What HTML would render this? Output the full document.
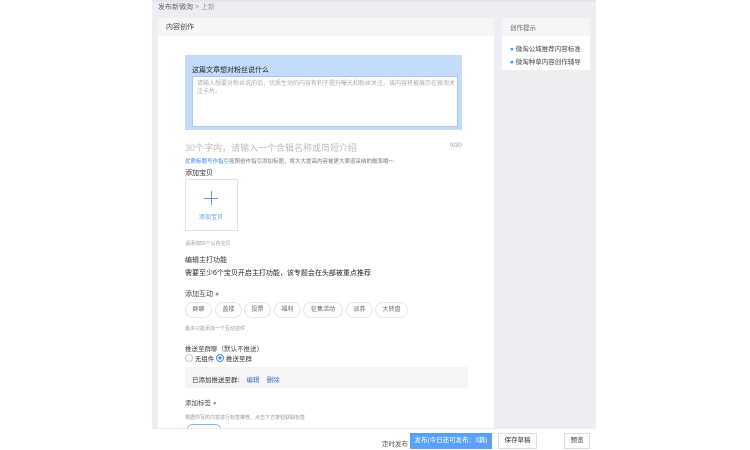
<!DOCTYPE html><html><head><meta charset="utf-8"><style>
body{margin:0;width:750px;height:450px;overflow:hidden;background:#fff;font-family:"Liberation Sans","Noto Sans CJK SC",sans-serif;position:relative}
.a{position:absolute}
.t{position:absolute;white-space:nowrap;color:#333}
.chip{position:absolute;top:302px;height:14px;border:1px solid #e6e6e6;border-radius:8px;font-size:6px;color:#666;line-height:14px;text-align:center}
</style></head><body>
<div class="a" style="left:152px;top:0;width:444px;height:428px;background:#eceef3"></div>
<div class="a" style="left:152px;top:0;width:444px;height:2px;background:#e3e5ea"></div>
<div class="t" style="left:158px;top:2px;font-size:7px;color:#666">发布新微淘 <span style="color:#999">&gt; 上新</span></div>
<div class="a" style="left:158px;top:18px;width:336px;height:410px;background:#fff"></div>
<div class="a" style="left:158px;top:18px;width:336px;height:18px;background:#f6f6f6"></div>
<div class="t" style="left:166px;top:22px;font-size:7px;color:#444">内容创作</div>
<div class="a" style="left:502px;top:18px;width:88px;height:52px;background:#fff"></div>
<div class="a" style="left:502px;top:18px;width:88px;height:18px;background:#f6f6f6"></div>
<div class="t" style="left:510px;top:22px;font-size:6.5px;color:#666">创作提示</div>
<div class="t" style="left:510px;top:43px;font-size:6.5px;color:#444"><span style="color:#3d8ef0">●</span> 微淘公域推荐内容标准</div>
<div class="t" style="left:510px;top:56px;font-size:6.5px;color:#444"><span style="color:#3d8ef0">●</span> 微淘种草内容创作辅导</div>
<div class="a" style="left:185px;top:55px;width:277px;height:75px;background:#c4dbfb"></div>
<div class="t" style="left:192px;top:65px;font-size:7px;color:#222">这篇文章想对粉丝说什么</div>
<div class="a" style="left:192px;top:76px;width:266px;height:51px;background:#fff;border:1px solid #aac9f2;box-sizing:border-box"></div>
<div class="t" style="left:197px;top:80px;font-size:6px;color:#aaa;white-space:normal;width:258px;line-height:8px">请输入想要对粉丝说的话，优质生动的内容有利于提升曝光和粉丝关注。该内容将被展示在微淘关注卡片。</div>
<div class="t" style="left:185px;top:141px;font-size:9px;color:#bbb">30个字内，请输入一个合辑名称或简短介绍</div>
<div class="t" style="left:450px;top:143px;font-size:6px;color:#999">0/30</div>
<div class="t" style="left:185px;top:157px;font-size:5.5px;color:#777"><span style="color:#3d7ef0">优质标题写作指引</span>按照创作指引添加标题，将大大提高内容被更大渠道采纳的概率哦～</div>
<div class="t" style="left:185px;top:168px;font-size:7px;color:#333">添加宝贝</div>
<div class="a" style="left:185px;top:179px;width:53px;height:52px;border:1px solid #d5e4fa;box-sizing:border-box"></div>
<div class="a" style="left:204px;top:198px;width:14px;height:1px;background:#5a9af0"></div>
<div class="a" style="left:211px;top:191px;width:1px;height:14px;background:#5a9af0"></div>
<div class="t" style="left:199px;top:212px;font-size:6px;color:#5a9af0">添加宝贝</div>
<div class="t" style="left:185px;top:240px;font-size:5px;color:#999">请添加50个以内宝贝</div>
<div class="t" style="left:185px;top:255px;font-size:7px;color:#333">编辑主打功能</div>
<div class="t" style="left:185px;top:268px;font-size:7px;color:#222">需要至少6个宝贝开启主打功能，该专题会在头部被重点推荐</div>
<div class="t" style="left:185px;top:289px;font-size:7px;color:#444">添加互动 <span style="color:#999">●</span></div>
<div class="chip" style="left:185px;width:25px">群聊</div>
<div class="chip" style="left:215px;width:25px">盖楼</div>
<div class="chip" style="left:244px;width:25px">投票</div>
<div class="chip" style="left:274px;width:25px">福利</div>
<div class="chip" style="left:303px;width:38px">征集活动</div>
<div class="chip" style="left:346px;width:25px">派券</div>
<div class="chip" style="left:375px;width:31px">大转盘</div>
<div class="t" style="left:185px;top:325px;font-size:5px;color:#999">最多只能添加一个互动挂件</div>
<div class="t" style="left:185px;top:343px;font-size:6.5px;color:#444">推送至群聊（默认不推送）</div>
<div class="t" style="left:185px;top:353px;font-size:6.5px;color:#333"><span style="display:inline-block;width:6px;height:6px;border:1px solid #ccc;border-radius:50%;vertical-align:-1px"></span> 无组件 <span style="display:inline-block;width:6px;height:6px;border:1px solid #3d8ef0;border-radius:50%;vertical-align:-1px;background:radial-gradient(#3d8ef0 35%,#fff 40%)"></span> 推送至群</div>
<div class="a" style="left:185px;top:367px;width:283px;height:21px;background:#f5f5f5"></div>
<div class="t" style="left:192px;top:374px;font-size:6.5px;color:#333">已添加推送至群: &nbsp;&nbsp;&nbsp;<span style="color:#3d6ed0">编辑</span> &nbsp;&nbsp;&nbsp;<span style="color:#3d6ed0">删除</span></div>
<div class="t" style="left:185px;top:397px;font-size:6.5px;color:#444">添加标签 <span style="color:#999">●</span></div>
<div class="t" style="left:185px;top:414px;font-size:5px;color:#999">根据你写的内容进行标签推荐，点击下方按钮获取标签</div>
<div class="a" style="left:187px;top:424px;width:34px;height:10px;border:1px solid #8fb8f0;border-radius:6px;box-sizing:border-box"></div>
<div class="a" style="left:152px;top:428px;width:444px;height:22px;background:#fff;border-top:1px solid #eee;box-sizing:border-box"></div>
<div class="t" style="left:382px;top:438px;font-size:6.5px;color:#555">定时发布</div>
<div class="a" style="left:410px;top:433px;width:82px;height:16px;background:#5aa0f5;color:#fff;font-size:6.5px;line-height:16px;text-align:center">发布(今日还可发布：3篇)</div>
<div class="a" style="left:498px;top:433px;width:39px;height:16px;border:1px solid #ddd;box-sizing:border-box;font-size:6.5px;line-height:14px;text-align:center;color:#333">保存草稿</div>
<div class="a" style="left:564px;top:433px;width:26px;height:16px;border:1px solid #ddd;box-sizing:border-box;font-size:6.5px;line-height:14px;text-align:center;color:#333">预览</div>
</body></html>
